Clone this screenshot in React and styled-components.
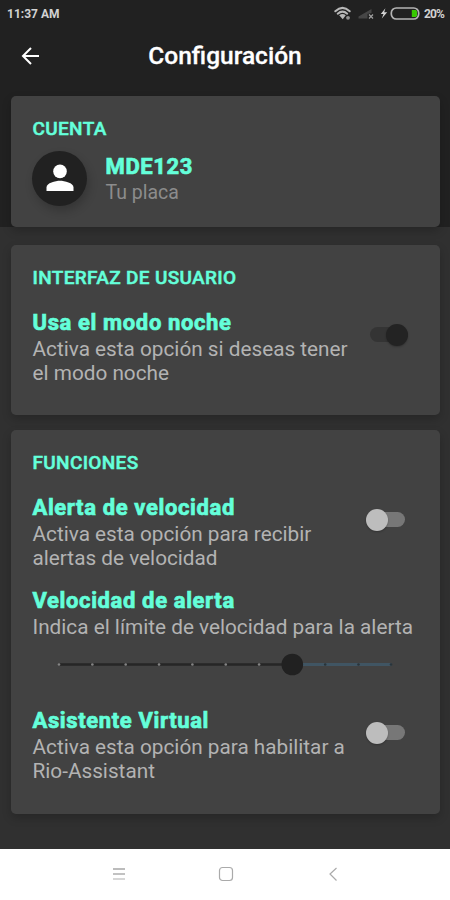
import React from "react";
import styled, { createGlobalStyle } from "styled-components";

const GlobalStyle = createGlobalStyle`
  * { box-sizing: border-box; }
  body { margin: 0; background: #303030; }
`;

const Screen = styled.div`
  width: 450px;
  height: 900px;
  display: flex;
  flex-direction: column;
  overflow: hidden;
  background: linear-gradient(#212121 0 227px, #303030 227px);
  font-family: Roboto, "Liberation Sans", sans-serif;
`;

const StatusBar = styled.div`
  height: 28px;
  flex: none;
  display: flex;
  align-items: center;
  justify-content: space-between;
  padding: 0 6px 0 7px;
  color: #d2d2d2;
`;

const Clock = styled.span`
  font-size: 12px;
  font-weight: 700;
  white-space: nowrap;
  letter-spacing: ${(p) => p.$spacing || 0}px;
`;

const AppBar = styled.header`
  height: 67.5px;
  flex: none;
  display: grid;
  grid-template-columns: 60px 1fr 60px;
  align-items: start;
`;

const BackButton = styled.button`
  border: 0;
  background: none;
  padding: 18px 0 0 20px;
  display: flex;
`;

const PageTitle = styled.h1`
  margin: 0;
  padding-top: 13px;
  text-align: center;
  white-space: nowrap;
  font-size: 24.5px;
  line-height: 29px;
  font-weight: 500;
  color: #fff;
  -webkit-text-stroke: 0.3px #fff;
`;

const Cards = styled.main`
  flex: none;
  height: 753.5px;
  display: flex;
  flex-direction: column;
  padding: 0 10px 0 11px;
`;

const Card = styled.section`
  height: ${(p) => p.$height}px;
  margin-bottom: ${(p) => p.$gap || 0}px;
  padding: ${(p) => p.$top || 21}px 0 0 21.5px;
  border-radius: 5px;
  background: #424242;
  box-shadow: 0 4px 10px rgba(0, 0, 0, 0.2);
`;

const Heading = styled.h2`
  margin: 0 0 ${(p) => p.$gap}px;
  font-size: 19px;
  line-height: 24px;
  font-weight: 500;
  color: #64ffda;
  white-space: nowrap;
  letter-spacing: 0.34px;
  -webkit-text-stroke: 0.5px #64ffda;
`;

const ItemTitle = styled.h3`
  margin: 0 0 1px;
  font-size: 22px;
  line-height: 26px;
  font-weight: 700;
  color: #64ffda;
  white-space: nowrap;
  letter-spacing: 0.63px;
  -webkit-text-stroke: 0.7px #64ffda;
`;

const Description = styled.p`
  margin: 0;
  font-size: ${(p) => (p.$dim ? 19.5 : 20.75)}px;
  line-height: 24.5px;
  color: ${(p) => (p.$dim ? "#8c8c8c" : "#b3b3b3")};
  white-space: nowrap;
`;

const Account = styled.div`
  display: flex;
`;

const AccountText = styled.div`
  padding-top: 4px;
`;

const Avatar = styled.div`
  width: 55px;
  height: 55px;
  margin: 1px 18.5px 0 -0.5px;
  border-radius: 50%;
  display: grid;
  place-items: center;
  background: #212121;
  box-shadow: 2px 5px 10px rgba(0, 0, 0, 0.2);
`;

const Setting = styled.div`
  display: flex;
  justify-content: space-between;
  margin-bottom: ${(p) => p.$gap || 0}px;
  padding-right: ${(p) => (p.$on ? 32 : 35)}px;
`;

const Switch = styled.div`
  display: flex;
  align-items: center;
  justify-content: ${(p) => (p.$on ? "flex-end" : "flex-start")};
  width: 38.5px;
  height: 15px;
  margin-top: 17.5px;
  border-radius: 8px;
  background: ${(p) => (p.$on ? "#343434" : "#777")};
`;

const Knob = styled.span`
  flex: none;
  width: 22px;
  height: 22px;
  margin-left: ${(p) => (p.$on ? 0 : -1)}px;
  border-radius: 50%;
  background: ${(p) => (p.$on ? "#232323" : "#bdbdbd")};
  box-shadow: 0 1px 2px rgba(0, 0, 0, 0.25);
`;

const Slider = styled.div`
  height: 68.5px;
  padding: 13.5px 0 0 24.5px;
`;

const NavBar = styled.nav`
  flex: 1;
  display: flex;
  justify-content: center;
  align-items: flex-start;
  gap: 91px;
  padding: 17px 0 0 2px;
  background: #fff;
`;

const Glyph = styled.svg`
  display: block;
  flex: none;
`;

const StatusIcons = () => (
  <Glyph width="90" height="20" viewBox="333 4 90 20" fill="none">
    <g stroke="#b8b8b8" strokeWidth="2" strokeLinecap="round">
      <path d="M335.3 11.2Q342.5 4.6 349.7 11.2" />
      <path d="M337.7 13.7Q342.5 9.5 347.2 13.7" />
    </g>
    <path d="M339.2 15.3Q342.5 12.6 345.8 15.3L342.7 19.2Z" fill="#b8b8b8" />
    <circle cx="348" cy="17.8" r="1.9" fill="#929292" />
    <path d="M358.5 18.5V16.5L371.5 9V13L367.5 14V18.5Z" fill="#464646" />
    <path d="M369 14.5L373 18.5M373 14.5L369 18.5" stroke="#a0a0a0" strokeWidth="1.2" />
    <path d="M385.4 8.2L380.8 14H383.5L381.8 18.5L387.2 12.3H384.2Z" fill="#d5d5d5" />
    <rect x="391.3" y="8" width="27.4" height="11" rx="5" stroke="#b4b4b4" strokeWidth="1.7" />
    <path d="M411.8 10H416L417 11.3V15.6L416 17H411.8Z" fill="#36c800" />
  </Glyph>
);

const StatusRight = styled.div`
  display: flex;
  align-items: center;
  gap: 1px;
`;

const TICKS = [0, 1, 2, 3, 4, 5, 6];

const Toggle = ({ on }) => (
  <Switch $on={on}>
    <Knob $on={on} />
  </Switch>
);

const SettingItem = ({ title, lines, on, gap }) => (
  <Setting $gap={gap} $on={on}>
    <div>
      <ItemTitle>{title}</ItemTitle>
      {lines.map((line) => (
        <Description key={line}>{line}</Description>
      ))}
    </div>
    <Toggle on={on} />
  </Setting>
);

export default function App() {
  return (
    <Screen>
      <GlobalStyle />
      <StatusBar>
        <Clock>11:37 AM</Clock>
        <StatusRight>
          <StatusIcons />
          <Clock $spacing={-0.9}>20%</Clock>
        </StatusRight>
      </StatusBar>
      <AppBar>
        <BackButton aria-label="Volver">
          <Glyph width="20" height="20" viewBox="0 0 20 20" fill="none" stroke="#fff" strokeWidth="2">
            <path d="M19 10H3M11 2L3 10L11 18" />
          </Glyph>
        </BackButton>
        <PageTitle>Configuración</PageTitle>
      </AppBar>
      <Cards>
        <Card $height={131.5} $gap={18} $top={21.5}>
          <Heading $gap={8.5}>CUENTA</Heading>
          <Account>
            <Avatar>
              <Glyph width="28" height="28" viewBox="0 0 28 28" fill="#fff">
                <circle cx="14" cy="7.4" r="6.8" />
                <path d="M.5 27V23.5C.5 19 9.5 16.8 14 16.8S27.5 19 27.5 23.5V27Z" />
              </Glyph>
            </Avatar>
            <AccountText>
              <ItemTitle>MDE123</ItemTitle>
              <Description $dim>Tu placa</Description>
            </AccountText>
          </Account>
        </Card>
        <Card $height={169.5} $gap={15.5}>
          <Heading $gap={19.5}>INTERFAZ DE USUARIO</Heading>
          <SettingItem
            on
            title="Usa el modo noche"
            lines={["Activa esta opción si deseas tener", "el modo noche"]}
          />
        </Card>
        <Card $height={383.5}>
          <Heading $gap={19.5}>FUNCIONES</Heading>
          <SettingItem
            title="Alerta de velocidad"
            lines={["Activa esta opción para recibir", "alertas de velocidad"]}
            gap={17}
          />
          <ItemTitle>Velocidad de alerta</ItemTitle>
          <Description>Indica el límite de velocidad para la alerta</Description>
          <Slider>
            <Glyph width="336" height="23" viewBox="57 653 336 23">
              <path d="M58.5 664.5H292" stroke="#262626" strokeWidth="2.5" />
              <path d="M292 664.5H391.5" stroke="#405563" strokeWidth="3" />
              {TICKS.map((i) => (
                <circle key={i} cx={59 + i * 33.35} cy="664.5" r="1.3" fill="#858585" />
              ))}
              {[325.2, 358.5, 391].map((x) => (
                <circle key={x} cx={x} cy="664.5" r="1.3" fill="#29343a" />
              ))}
              <circle cx="292.3" cy="664.5" r="10.8" fill="#212121" />
            </Glyph>
          </Slider>
          <SettingItem
            title="Asistente Virtual"
            lines={["Activa esta opción para habilitar a", "Rio-Assistant"]}
          />
        </Card>
      </Cards>
      <NavBar>
        <Glyph width="16" height="16" viewBox="0 0 16 16" fill="none" strokeWidth="1.7">
          <path d="M2 3H14" stroke="#b0b0b0" />
          <path d="M2 8H14" stroke="#b8b8b8" />
          <path d="M2 13H14" stroke="#d0d0d0" />
        </Glyph>
        <Glyph width="16" height="16" viewBox="0 0 16 16" fill="none" stroke="#aaa" strokeWidth="1.2">
          <rect x="1.5" y="1.5" width="13" height="13" rx="3" />
        </Glyph>
        <Glyph width="16" height="16" viewBox="0 0 16 16" fill="none" stroke="#aaa" strokeWidth="1.2">
          <path d="M11.5 2L5 8L11.5 14.5" />
        </Glyph>
      </NavBar>
    </Screen>
  );
}
